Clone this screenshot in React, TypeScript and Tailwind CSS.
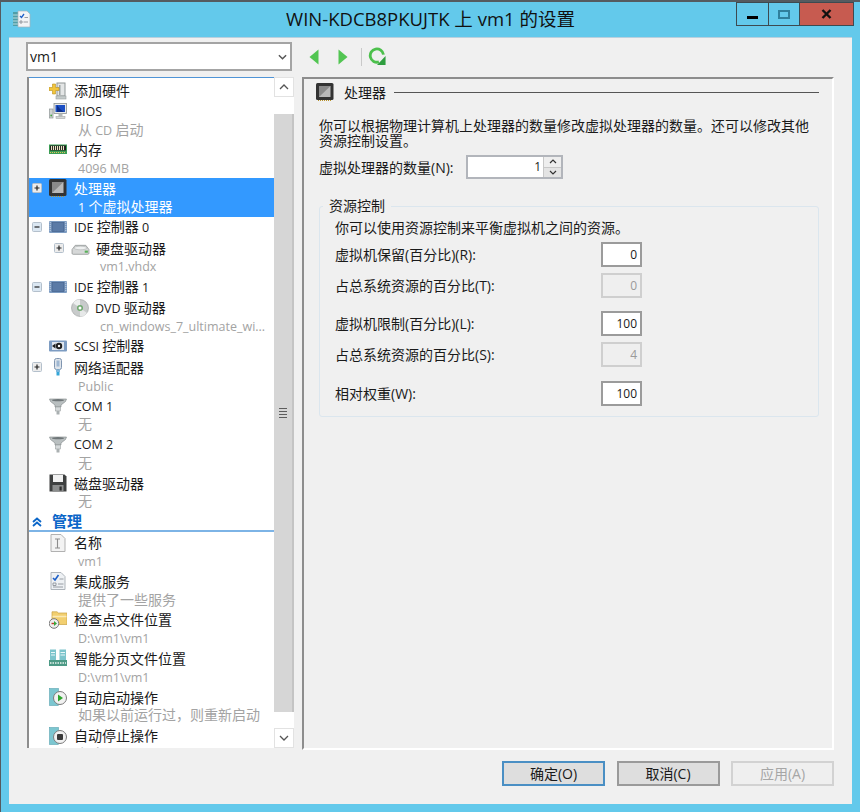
import React from 'react';

const FONT = "font-['Open_Sans','Noto_Sans_CJK_SC',sans-serif]";

// latin runs render smaller than the CJK ones in the original dialog font
function Mixed({ text, latin = 'text-[12.5px]' }: { text: string; latin?: string }) {
  return (
    <span>
      {text.split(/([\x00-\x7f]+)/).map((part, i) =>
        /^[\x00-\x7f]+$/.test(part) ? (
          <span key={i} className={latin}>{part}</span>
        ) : (
          <span key={i}>{part}</span>
        )
      )}
    </span>
  );
}

type IconProps = { className?: string };

function Svg({ className = 'h-[18px] w-[18px]', children }: IconProps & { children: React.ReactNode }) {
  return (
    <svg viewBox="0 0 18 18" className={`shrink-0 ${className}`}>
      {children}
    </svg>
  );
}

const AddIcon = () => (
  <Svg>
    <rect x="8" y="1" width="8" height="13" fill="#e4e6e6" stroke="#8f9696" />
    <rect x="10" y="3" width="1.500" height="10" fill="#9aa2a2" />
    <rect x="7" y="14" width="10" height="3" fill="#c4caca" stroke="#9aa0a0" strokeWidth="0.600" />
    <path d="M0 5.500h3.500V2h3v3.500H10v3H6.500V12h-3V8.500H0z" fill="#f2c53d" stroke="#b8901c" strokeWidth="0.600" />
  </Svg>
);
const BiosIcon = () => (
  <Svg>
    <rect x="0.500" y="7" width="3.500" height="9" fill="#cfd3d3" stroke="#8f9696" strokeWidth="0.700" />
    <circle cx="2.200" cy="13.500" r="0.900" fill="#46a546" />
    <rect x="5" y="1.500" width="12.500" height="10" fill="#e8eaea" stroke="#8a9090" strokeWidth="0.800" />
    <rect x="6.500" y="3" width="9.500" height="7" fill="#1c4fc4" />
    <path d="M8 3l3 4 4 3H8z" fill="#0d2f8c" />
    <rect x="9.500" y="11.500" width="4" height="3" fill="#b4b9b9" />
    <rect x="7" y="14.500" width="9" height="2" fill="#d4d7d7" stroke="#999" strokeWidth="0.500" />
  </Svg>
);
const MemoryIcon = () => (
  <Svg>
    <rect x="0" y="3.500" width="18" height="9.500" fill="#3c9d55" />
    <rect x="1" y="4.500" width="16" height="5" fill="#1c1c1c" />
    <path d="M2.500 5v4M4.500 5v4M6.500 5v4M8.500 5v4M10.500 5v4M12.500 5v4M14.500 5v4" stroke="#e9e4c0" strokeWidth="1.100" />
    <path d="M1 11.500h16" stroke="#e0c25c" strokeWidth="1.200" strokeDasharray="1 1" />
  </Svg>
);
const CpuIcon = ({ className }: IconProps) => (
  <Svg className={className}>
    <rect x="0" y="0" width="17.500" height="17" rx="1.500" fill="#333333" />
    <rect x="3" y="3" width="11.500" height="11" fill="#b9b9b9" />
    <path d="M3 3h11.500L3 14z" fill="#8a8a8a" />
    <path d="M2 17.500h13" stroke="#b8922c" strokeWidth="1" strokeDasharray="1 1" />
  </Svg>
);
const IdeIcon = () => (
  <Svg>
    <rect x="0" y="3" width="18" height="12" rx="1" fill="#7d9cc2" />
    <rect x="3" y="4.500" width="12" height="9" fill="#5a7aa6" stroke="#3f5d88" strokeWidth="0.600" />
    <path d="M1.200 4v10M16.800 4v10" stroke="#c2d2e6" strokeDasharray="1 1" />
  </Svg>
);
const DiskIcon = () => (
  <Svg className="h-[19px] w-[19px]">
    <path d="M1 10l3-4h10l3 4v3.500a1 1 0 0 1-1 1H2a1 1 0 0 1-1-1z" fill="#d6d8d8" stroke="#8b8f8f" strokeWidth="0.700" />
    <ellipse cx="9" cy="8.500" rx="6" ry="1.700" fill="#eef0f0" stroke="#a8acac" strokeWidth="0.500" />
    <rect x="13" y="11" width="3" height="2" fill="#58b058" />
  </Svg>
);
const DvdIcon = () => (
  <Svg>
    <circle cx="9" cy="9" r="8.500" fill="#c8cbcb" stroke="#9a9e9e" strokeWidth="0.600" />
    <path d="M9 9L2 4a8.500 8.500 0 0 1 7-3.500z" fill="#eceeee" />
    <path d="M9 9l7 5a8.500 8.500 0 0 1-7 3.500z" fill="#e6e8e8" />
    <circle cx="9" cy="9" r="3" fill="#6fa86f" />
    <circle cx="9" cy="9" r="1.500" fill="#ffffff" />
  </Svg>
);
const ScsiIcon = () => (
  <Svg>
    <rect x="0" y="3.500" width="18" height="11" rx="1" fill="#7d9cc2" />
    <rect x="3" y="5" width="12" height="8" fill="#dfe6ee" />
    <circle cx="10" cy="9" r="3.200" fill="#1f1f1f" />
    <circle cx="10" cy="9" r="1.200" fill="#ffffff" />
    <path d="M3 9l3.500-2.500v5z" fill="#1f1f1f" />
  </Svg>
);
const NetIcon = () => (
  <Svg>
    <rect x="5.500" y="0.500" width="7" height="11" rx="2" fill="#dfe4ea" stroke="#7f95b0" />
    <rect x="7.500" y="2.500" width="3" height="6" fill="#9fb7d2" />
    <rect x="7" y="11.500" width="4" height="2.500" fill="#7fb7dc" />
    <rect x="7.500" y="14" width="3" height="3.500" fill="#34a6d8" />
  </Svg>
);
const ComIcon = () => (
  <Svg>
    <path d="M0.500 2h17l-1 2.500-4.500 3.500v2H6V8L1.500 4.500z" fill="#b9bfc0" stroke="#7f8688" strokeWidth="0.600" />
    <ellipse cx="9" cy="3.200" rx="6" ry="1.100" fill="#6f7678" />
    <rect x="6.500" y="10" width="5" height="4" fill="#d6dadb" stroke="#8c9293" strokeWidth="0.500" />
    <rect x="7.500" y="14" width="3" height="3.500" fill="#aab0b1" />
  </Svg>
);
const FloppyIcon = () => (
  <Svg>
    <path d="M0.500 0.500h15l2 2v15H0.500z" fill="#3e4040" />
    <rect x="4" y="1" width="10" height="7" fill="#f2f2f2" />
    <rect x="3.500" y="11" width="11" height="6.500" fill="#8b8d8d" />
    <rect x="10.500" y="12.500" width="2.200" height="4" fill="#2c2c2c" />
  </Svg>
);
const NameIcon = () => (
  <Svg>
    <path d="M2 0.500h10l4 4V17.500H2z" fill="#f3f3f3" stroke="#b1b1b1" />
    <path d="M6 5h5M6 14h5M8.500 5v9" stroke="#8d8d8d" strokeWidth="1.100" fill="none" />
  </Svg>
);
const ServiceIcon = () => (
  <Svg>
    <path d="M2 0.500h10l4 4V17.500H2z" fill="#eef1f4" stroke="#aeb4ba" />
    <path d="M4 6l2 2 3.500-5" stroke="#1d5fc8" strokeWidth="1.600" fill="none" />
    <path d="M10.500 7h4M4 11h3v2.500H4zM9 12h5.500M4 15h10" stroke="#8d939a" strokeWidth="0.900" fill="none" />
  </Svg>
);
const CheckpointIcon = () => (
  <Svg>
    <path d="M3 3V0.800h5l1.500 1.200h8.500v11.500H3z" fill="#f2cf70" stroke="#c9a243" strokeWidth="0.700" />
    <path d="M3.500 5.500h14" stroke="#fbe9b4" strokeWidth="1.500" />
    <circle cx="5" cy="12.500" r="4.800" fill="#eeeeee" stroke="#777" />
    <path d="M2.500 12.500h3.500" stroke="#c43a2f" strokeWidth="1.400" />
    <path d="M5 10l3 2.500-3 2.500z" fill="#3aa63a" />
  </Svg>
);
const PagingIcon = () => (
  <Svg>
    <path d="M1 0.500h6V11H1zM10.500 0.500h6.500V11h-6.500z" fill="#7cc4cc" />
    <path d="M2 3.500h4M2 6h4M11.500 3.500h4.500M11.500 6h4.500" stroke="#e8f6f8" />
    <rect x="0" y="11" width="18" height="6" fill="#4d9a86" />
    <path d="M1 14h16" stroke="#e7f2ee" strokeWidth="1.400" strokeDasharray="1.500 1" />
  </Svg>
);
const AutoIcon = ({ kind }: { kind: 'start' | 'stop' }) => (
  <Svg>
    <rect x="0.500" y="0.500" width="9" height="17" fill="#7cc6d0" stroke="#5aa5b2" strokeWidth="0.600" />
    <circle cx="11" cy="10" r="6.500" fill="#f1f1f1" stroke="#7b7b7b" />
    {kind === 'start' ? (
      <path d="M9 6.500l5 3.500-5 3.500z" fill="#2ea52e" />
    ) : (
      <rect x="8" y="7" width="6" height="6" rx="1" fill="#3a3a3a" />
    )}
  </Svg>
);

type Row = {
  label: string;
  sub?: string;
  icon: React.ReactNode;
  toggle?: 'plus' | 'minus';
  level?: 1;
  selected?: boolean;
};

const hardware: Row[] = [
  { label: '添加硬件', icon: <AddIcon /> },
  { label: 'BIOS', sub: '从 CD 启动', icon: <BiosIcon /> },
  { label: '内存', sub: '4096 MB', icon: <MemoryIcon /> },
  { label: '处理器', sub: '1 个虚拟处理器', icon: <CpuIcon />, toggle: 'plus', selected: true },
  { label: 'IDE 控制器 0', icon: <IdeIcon />, toggle: 'minus' },
  { label: '硬盘驱动器', sub: 'vm1.vhdx', icon: <DiskIcon />, toggle: 'plus', level: 1 },
  { label: 'IDE 控制器 1', icon: <IdeIcon />, toggle: 'minus' },
  { label: 'DVD 驱动器', sub: 'cn_windows_7_ultimate_wi...', icon: <DvdIcon />, level: 1 },
  { label: 'SCSI 控制器', icon: <ScsiIcon /> },
  { label: '网络适配器', sub: 'Public', icon: <NetIcon />, toggle: 'plus' },
  { label: 'COM 1', sub: '无', icon: <ComIcon /> },
  { label: 'COM 2', sub: '无', icon: <ComIcon /> },
  { label: '磁盘驱动器', sub: '无', icon: <FloppyIcon /> },
];

const management: Row[] = [
  { label: '名称', sub: 'vm1', icon: <NameIcon /> },
  { label: '集成服务', sub: '提供了一些服务', icon: <ServiceIcon /> },
  { label: '检查点文件位置', sub: 'D:\\vm1\\vm1', icon: <CheckpointIcon /> },
  { label: '智能分页文件位置', sub: 'D:\\vm1\\vm1', icon: <PagingIcon /> },
  { label: '自动启动操作', sub: '如果以前运行过，则重新启动', icon: <AutoIcon kind="start" /> },
  { label: '自动停止操作', sub: '保存', icon: <AutoIcon kind="stop" /> },
];

function Toggle({ type }: { type?: 'plus' | 'minus' }) {
  return (
    <span className="flex w-[17px] shrink-0 items-center">
      {type && (
        <svg viewBox="0 0 10 10" className="h-[10px] w-[10px]">
          <rect x="0.500" y="0.500" width="9" height="9" rx="1" fill={type === 'minus' ? '#dbe7f2' : '#ececec'} stroke="#b4c0cc" />
          <path d={type === 'plus' ? 'M2.500 5h5M5 2.500v5' : 'M2.500 5h5'} stroke="#222" strokeWidth="1.200" />
        </svg>
      )}
    </span>
  );
}

function TreeRow({ row }: { row: Row }) {
  return (
    <div className={row.selected ? 'bg-[#3399ff] text-white' : 'text-[#1a1a1a]'}>
      <div className={`flex items-center ${row.sub ? 'h-[20.6px]' : 'h-[21px]'} ${row.level ? 'pl-[25px]' : 'pl-[3px]'}`}>
        <Toggle type={row.toggle} />
        {row.icon}
        <span className={`whitespace-nowrap ${row.level ? 'ml-[6px]' : 'ml-[7px]'}`}>
          <Mixed text={row.label} />
        </span>
      </div>
      {row.sub && (
        <div
          className={`flex h-[18px] items-start whitespace-nowrap ${row.level ? 'pl-[71px]' : 'pl-[49px]'} ${
            row.selected ? '' : 'text-[#a3a3a3]'
          }`}
        >
          <Mixed text={row.sub} />
        </div>
      )}
    </div>
  );
}

function ScrollButton({ dir }: { dir: 'up' | 'down' }) {
  return (
    <div className="flex h-[20px] items-center justify-center border border-[#e2e2e2] bg-white">
      <svg viewBox="0 0 10 6" className="h-[6px] w-[10px]">
        <path d={dir === 'up' ? 'M1 5l4-4 4 4' : 'M1 1l4 4 4-4'} stroke="#555" strokeWidth="1.300" fill="none" />
      </svg>
    </div>
  );
}

function Scrollbar() {
  return (
    <div className="flex w-[20px] shrink-0 flex-col bg-white">
      <ScrollButton dir="up" />
      <div className="h-[17px]" />
      <div className="flex flex-1 flex-col items-center justify-center gap-[2px] border-r-2 border-[#c4c4c4] bg-[#d6d6d6]">
        <span className="h-px w-[8px] bg-[#5d5d5d]" />
        <span className="h-px w-[8px] bg-[#5d5d5d]" />
        <span className="h-px w-[8px] bg-[#5d5d5d]" />
        <span className="h-px w-[8px] bg-[#5d5d5d]" />
      </div>
      <div className="h-[16px]" />
      <ScrollButton dir="down" />
    </div>
  );
}

function NumberBox({ value, disabled }: { value: string; disabled?: boolean }) {
  return (
    <div
      className={`flex h-[25px] w-[41px] items-center justify-end border-2 pr-[3px] text-[12px] ${
        disabled ? 'border-[#cfcfcf] bg-[#efefef] text-[#9a9a9a]' : 'border-[#9b9b9b] bg-white text-[#1a1a1a]'
      }`}
    >
      {value}
    </div>
  );
}

function FieldRow({ label, value, disabled, className }: { label: string; value: string; disabled?: boolean; className?: string }) {
  return (
    <div className={`flex items-center justify-between ${className ?? ''}`}>
      <Mixed text={label} latin="text-[14px]" />
      <NumberBox value={value} disabled={disabled} />
    </div>
  );
}

function DialogButton({ label, variant }: { label: string; variant?: 'default' | 'disabled' }) {
  const look =
    variant === 'default'
      ? 'border-[#4a8fc4] bg-[#dedede] text-[#1a1a1a]'
      : variant === 'disabled'
      ? 'border-[#d2d2d2] bg-[#efefef] text-[#a6a6a6]'
      : 'border-[#9a9a9a] bg-[#dedede] text-[#1a1a1a]';
  return (
    <div className={`flex h-[25px] w-[103px] items-center justify-center border-2 ${look}`}>
      <Mixed text={label} latin="text-[14px]" />
    </div>
  );
}

export default function App() {
  return (
    <div className={`flex h-[812px] w-[860px] flex-col overflow-hidden border-l border-t-2 border-[#555b60] bg-[#63c9eb] text-[14px] leading-[15px] ${FONT}`}>
      {/* title bar */}
      <div className="grid h-[35px] shrink-0 grid-cols-[1fr_auto_1fr]">
        <div className="pl-[11px] pt-[8px]">
          <svg viewBox="0 0 19 18" className="h-[18px] w-[19px]">
            <rect x="1" y="2" width="5" height="14" fill="#4f9ea8" />
            <path d="M1 5h5M1 8h5M1 11h5M1 14h5" stroke="#d6eef0" strokeWidth="0.800" />
            <path d="M6 1h9l3 3v13H6z" fill="#f2f4f6" stroke="#a7b1ba" strokeWidth="0.700" />
            <path d="M8 6l1.500 1.500L12 4" stroke="#1d5fc8" strokeWidth="1.300" fill="none" />
            <path d="M12.500 7.500h3.500M8 11h2v2H8zM11.500 12h4.500" stroke="#80878e" strokeWidth="0.800" fill="none" />
          </svg>
        </div>
        <div className="whitespace-nowrap pt-[8px] text-[18.5px] leading-[18px] text-[#111]">
          <Mixed text="WIN-KDCB8PKUJTK 上 vm1 的设置" latin="text-[18.5px]" />
        </div>
        <div className="flex justify-end pr-[6px]">
          <div className="flex h-[24px] w-[33px] items-center justify-center border border-[#3d4a50]">
            <span className="mt-[6px] h-[3px] w-[11px] bg-black" />
          </div>
          <div className="flex h-[24px] w-[31px] items-start justify-center border-y border-r border-[#3d4a50] pt-[7px]">
            <span className="h-[9px] w-[12px] border-2 border-[#2f7f9c]" />
          </div>
          <div className="flex h-[24px] w-[54px] items-center justify-center border-y border-r border-[#3d4a50] bg-[#c75b50]">
            <svg viewBox="0 0 10 10" className="h-[10px] w-[11px]">
              <path d="M1 1l8 8M9 1l-8 8" stroke="#111" strokeWidth="2.400" />
            </svg>
          </div>
        </div>
      </div>

      {/* window client area */}
      <div className="ml-[8px] mr-[8px] flex h-[767px] flex-col border-t border-[#b9d0de] bg-[#f0f0f0] pl-[17px] pr-[18px] pt-[4px]">
        <div className="flex h-[29px] shrink-0">
          <div className="flex w-[266px] items-center justify-between border-2 border-[#a4a4a4] bg-white pl-[2px] pr-[3px] text-[#1a1a1a]">
            <span>vm1</span>
            <svg viewBox="0 0 10 6" className="h-[6px] w-[9px]">
              <path d="M1 1l4 4 4-4" stroke="#555" strokeWidth="1.600" fill="none" />
            </svg>
          </div>
          <div className="ml-[17px] flex items-center">
            <svg viewBox="0 0 10 16" className="h-[16px] w-[10px]">
              <path d="M9.500 0.500v15L0.500 8z" fill="#52c552" />
            </svg>
            <svg viewBox="0 0 10 16" className="ml-[19px] h-[16px] w-[10px]">
              <path d="M0.500 0.500v15L9.500 8z" fill="#52c552" />
            </svg>
            <span className="ml-[13px] h-[18px] w-px bg-[#c9c9c9]" />
            <svg viewBox="0 0 20 20" className="ml-[5px] h-[19px] w-[20px]">
              <path d="M12 15.700A7 7 0 1 1 16.800 8" stroke="#4cc04c" strokeWidth="3" fill="none" />
              <path d="M19 9.500V19h-9z" fill="#2f9e3f" />
            </svg>
          </div>
        </div>

        <div className="mt-[6px] flex h-[672px] shrink-0">
          {/* hardware tree */}
          <div className="ml-px flex h-[671px] w-[267px] shrink-0 overflow-hidden border-l-2 border-[#8d8d8d] bg-white">
            <div className="min-w-0 flex-1 overflow-hidden">
              <div className="h-[3px] border-t border-[#4f94d6]" />
              {hardware.map((row) => (
                <TreeRow key={row.label} row={row} />
              ))}
              <div className="flex h-[21px] items-center border-b-2 border-[#7db4e6] pl-[3px] pt-[2px] font-bold text-[#0b66c8]">
                <svg viewBox="0 0 10 10" className="h-[10px] w-[10px]">
                  <path d="M1 5l4-3.500L9 5M1 9l4-3.500L9 9" stroke="#0b66c8" strokeWidth="1.800" fill="none" />
                </svg>
                <span className="ml-[10px] text-[15px]">管理</span>
              </div>
              {management.map((row) => (
                <TreeRow key={row.label} row={row} />
              ))}
            </div>
            <Scrollbar />
          </div>

          {/* settings panel */}
          <div className="ml-[8px] flex h-[673px] w-[532px] shrink-0 flex-col border-2 border-b-white border-l-[#8d8d8d] border-r-white border-t-[#8d8d8d] pl-[15px] pr-[13px] pt-[4px] text-[#1a1a1a]">
            <div className="flex h-[18px] items-center">
              <CpuIcon className="-ml-[3px] h-[18px] w-[18px]" />
              <span className="ml-[10px]">处理器</span>
              <span className="ml-[8px] h-px flex-1 bg-[#555]" />
            </div>
            <p className="mt-[17px]">
              你可以根据物理计算机上处理器的数量修改虚拟处理器的数量。还可以修改其他
              <br />
              资源控制设置。
            </p>
            <div className="mt-[7px] flex h-[24px] items-center">
              <span className="w-[147px]">
                <Mixed text="虚拟处理器的数量(N):" latin="text-[14px]" />
              </span>
              <div className="flex h-[24px] w-[97px] border-2 border-[#b2b5bb] bg-white text-[12px]">
                <span className="flex-1 pr-[2px] text-right leading-[20px]">1</span>
                <div className="flex w-[18px] flex-col border-l border-[#c8c8c8]">
                  <span className="flex flex-1 items-center justify-center bg-[#eeeeee]">
                    <svg viewBox="0 0 8 5" className="h-[5px] w-[8px]">
                      <path d="M1 4l3-3 3 3" stroke="#333" strokeWidth="1.200" fill="none" />
                    </svg>
                  </span>
                  <span className="flex flex-1 items-center justify-center border-t border-[#c8c8c8] bg-[#e4e4e4]">
                    <svg viewBox="0 0 8 5" className="h-[5px] w-[8px]">
                      <path d="M1 1l3 3 3-3" stroke="#333" strokeWidth="1.200" fill="none" />
                    </svg>
                  </span>
                </div>
              </div>
            </div>

            <fieldset className="mt-[19px] h-[219px] w-[500px] rounded-[3px] border border-[#dbe6ee] pl-[15px] pr-[176px]">
              <legend className="-ml-[12px] px-[6px] leading-[16px]">资源控制</legend>
              <p className="mt-[6px]">你可以使用资源控制来平衡虚拟机之间的资源。</p>
              <FieldRow className="mt-[7px]" label="虚拟机保留(百分比)(R):" value="0" />
              <FieldRow className="mt-[6px]" label="占总系统资源的百分比(T):" value="0" disabled />
              <FieldRow className="mt-[13px]" label="虚拟机限制(百分比)(L):" value="100" />
              <FieldRow className="mt-[6px]" label="占总系统资源的百分比(S):" value="4" disabled />
              <FieldRow className="mt-[14px]" label="相对权重(W):" value="100" />
            </fieldset>
          </div>
        </div>

        <div className="mt-[12px] flex justify-end gap-[11.500px]">
          <DialogButton label="确定(O)" variant="default" />
          <DialogButton label="取消(C)" />
          <DialogButton label="应用(A)" variant="disabled" />
        </div>
      </div>
    </div>
  );
}
